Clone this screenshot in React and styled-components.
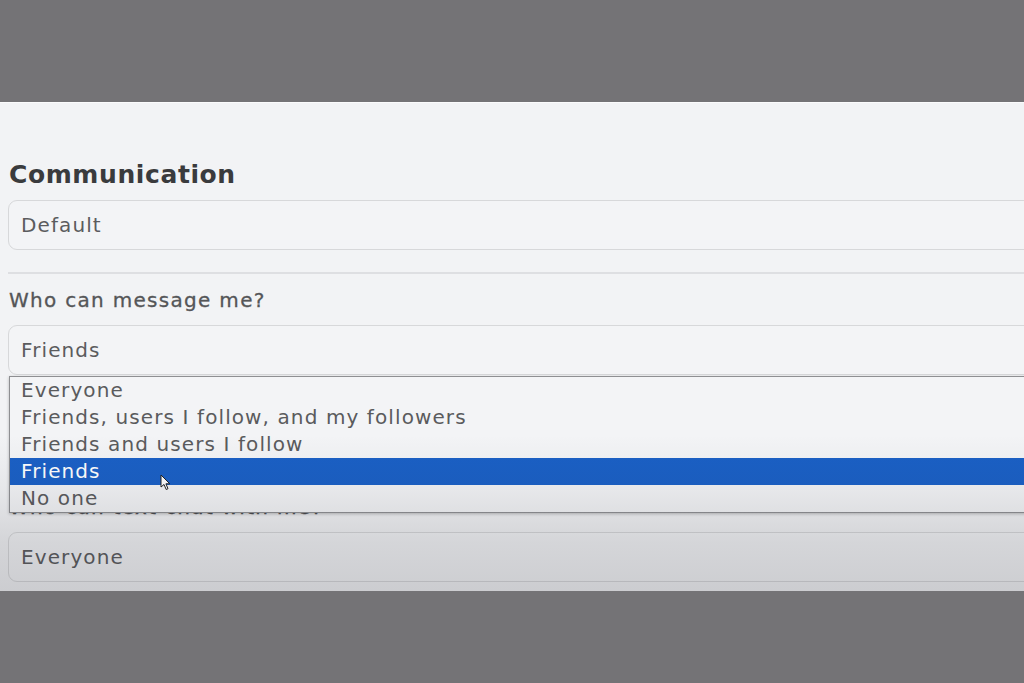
import React from "react";
import styled, { createGlobalStyle } from "styled-components";

const Global = createGlobalStyle`
  html, body { margin: 0; padding: 0; background: #737275; }
  body { font-family: "DejaVu Sans", "Open Sans", sans-serif; overflow: hidden; }
`;

const Screen = styled.div`
  width: 1024px;
  height: 683px;
  display: flex;
  flex-direction: column;
  background: #737275;
  overflow: hidden;
`;

const Band = styled.div`
  height: ${(p) => p.$h}px;
  flex: none;
  background: #747376;
`;

const Panel = styled.div`
  position: relative;
  height: 489px;
  flex: none;
  background: #f2f3f5;
  border-top: 1px solid #fbfbfc;
  box-sizing: border-box;
  padding: 56px 0 0 8px;
  overflow: hidden;
`;

const Shade = styled.div`
  position: absolute;
  inset: 0;
  pointer-events: none;
  background: linear-gradient(
    to bottom,
    rgba(40, 40, 50, 0) 0%,
    rgba(40, 40, 50, 0) 68%,
    rgba(40, 40, 50, 0.06) 79%,
    rgba(40, 40, 50, 0.15) 90%,
    rgba(40, 40, 50, 0.19) 100%
  );
  z-index: 5;
`;

const Heading = styled.h2`
  margin: 0 0 9px 1px;
  font-size: 25px;
  line-height: 32px;
  font-weight: 700;
  color: #3a3b3d;
  letter-spacing: 0.6px;
`;

const Field = styled.div`
  width: 1060px;
  height: 50px;
  box-sizing: border-box;
  border: 1px solid #d7d8da;
  border-radius: 9px;
  display: flex;
  align-items: center;
  padding-left: 12px;
  font-size: 20px;
  color: #5b5c5e;
  background: #f3f4f6;
  letter-spacing: 1.1px;
`;

const Divider = styled.hr`
  margin: 22px 0 0 0;
  width: 1060px;
  border: none;
  height: 2px;
  background: #dedfe2;
`;

const Label = styled.div`
  margin: ${(p) => p.$mt}px 0 13px 1px;
  font-size: 20px;
  line-height: 24px;
  font-weight: 400;
  color: #555658;
  letter-spacing: 1.3px;
  -webkit-text-stroke: 0.3px #555658;
`;

const Anchor = styled.div`
  position: relative;
`;

const Menu = styled.ul`
  position: absolute;
  top: 51px;
  left: 1px;
  width: 1060px;
  margin: 0;
  padding: 0;
  list-style: none;
  background: #f3f4f6;
  border: 1px solid #8e8f92;
  box-shadow: 0 1px 3px rgba(0, 0, 0, 0.25);
  z-index: 3;
`;

const Option = styled.li`
  height: 27px;
  line-height: 27px;
  padding-left: 11px;
  font-size: 20px;
  letter-spacing: 1.1px;
  color: ${(p) => (p.$active ? "#ffffff" : "#5a5b5d")};
  background: ${(p) => (p.$active ? "#1a60c6" : "transparent")};
`;

const Cursor = styled.svg`
  position: absolute;
  left: 150px;
  top: 97px;
  width: 12px;
  height: 17px;
  z-index: 4;
`;

const options = [
  "Everyone",
  "Friends, users I follow, and my followers",
  "Friends and users I follow",
  "Friends",
  "No one",
];

export default function App() {
  return (
    <Screen>
      <Global />
      <Band $h={102} />
      <Panel>
        <Heading>Communication</Heading>
        <Field>Default</Field>
        <Divider />
        <Label $mt={14}>Who can message me?</Label>
        <Anchor>
          <Field>Friends</Field>
          <Menu>
            {options.map((o) => (
              <Option key={o} $active={o === "Friends"}>
                {o}
              </Option>
            ))}
            <Cursor viewBox="0 0 12 17">
              <path
                d="M1 1 L1 13 L4 10.5 L6.2 15.5 L8 14.7 L5.9 9.8 L9.8 9.8 Z"
                fill="#ffffff"
                stroke="#222"
                strokeWidth="1"
                strokeLinejoin="round"
              />
            </Cursor>
          </Menu>
        </Anchor>
        <Label $mt={120}>Who can text chat with me?</Label>
        <Field>Everyone</Field>
        <Shade />
      </Panel>
      <Band $h={92} />
    </Screen>
  );
}
